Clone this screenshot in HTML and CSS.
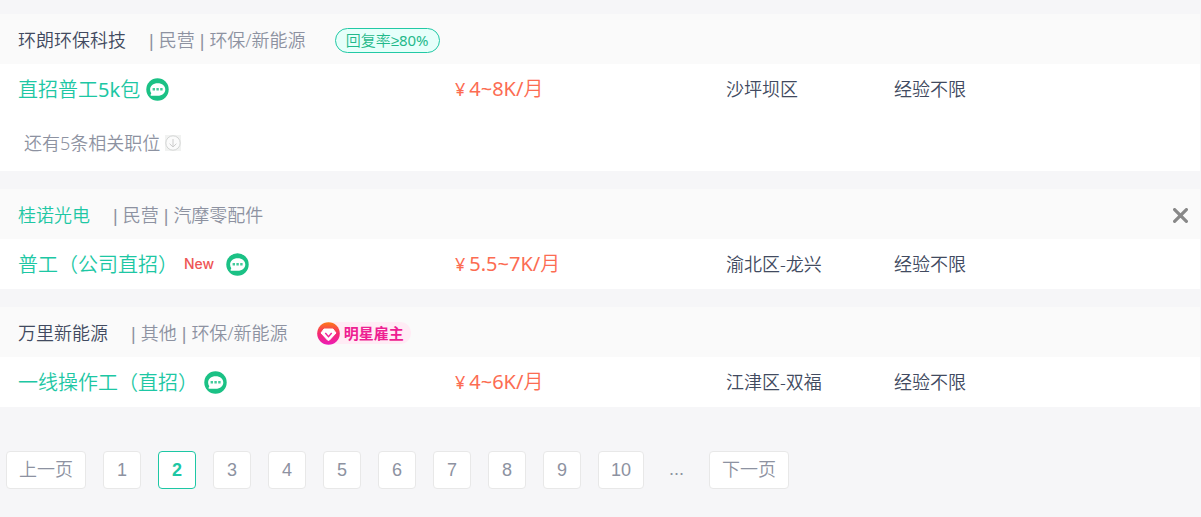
FILE: index.html
```
<!DOCTYPE html>
<html lang="zh-CN">

<head>
    <meta charset="UTF-8">
    <meta name="viewport" content="width=device-width, initial-scale=1.0">
    <title>职位列表</title>

    <link rel="stylesheet" href="styles.css">
</head>

<body>
    <svg hidden>
        <symbol id="chat" viewBox="0 0 23 23">
            <circle cx="11.5" cy="11.5" r="11.2" fill="#1bc185" />
            <path d="M11.7 5.2c4.5 0 7.6 2.6 7.6 6.2s-3.1 6.3-7.6 6.3H5.2c-.8 0-.9-.7-.5-1.2l.6-1.2c-.8-1.1-1.2-2.4-1.2-3.9 0-3.6 3.1-6.2 7.6-6.2z" fill="#fff" />
            <path d="M6.6 10.1h2.4v2.4H6.6zM10.4 10.1h2.4v2.4h-2.4zM14.2 10.1h2.4v2.4h-2.4z" fill="#43cb9b" />
        </symbol>
    </svg>

    <main class="job-list">
        <section class="job-card">
            <header class="company">
                <a class="company-name" href="#">环朗环保科技</a>
                <p class="company-info"><span class="sep">| </span>民营<span class="sep"> | </span>环保/新能源</p>
                <span class="reply-tag">回复率<span class="sep">≥</span><span class="latin">80%</span></span>
            </header>
            <div class="job">
                <div class="job-title">
                    <a href="#">直招普工<span class="latin">5k</span>包</a>
                    <svg class="chat-icon"><use href="#chat" /></svg>
                </div>
                <span class="salary"><span class="yen">¥</span><span class="latin">4~8K/</span>月</span>
                <span>沙坪坝区</span>
                <span>经验不限</span>
            </div>
            <button class="more" type="button">
                还有5条相关职位
                <svg class="more-icon" viewBox="0 0 16 16">
                    <rect width="16" height="16" fill="#f1f2f1" />
                    <circle cx="8" cy="8" r="7.2" fill="#fbfbfb" stroke="#d3d5d4" />
                    <path d="M8 4v8M4.6 8.7L8 12l3.4-3.3" fill="none" stroke="#ccc" />
                </svg>
            </button>
        </section>

        <section class="job-card">
            <header class="company">
                <a class="company-name active" href="#">桂诺光电</a>
                <p class="company-info"><span class="sep">| </span>民营<span class="sep"> | </span>汽摩零配件</p>
                <button class="close" type="button" aria-label="关闭">
                    <svg viewBox="0 0 14 14">
                        <path d="M1.5 1.5l11 11M12.5 1.5l-11 11" stroke="#888" stroke-width="3" stroke-linecap="round" />
                    </svg>
                </button>
            </header>
            <div class="job">
                <div class="job-title">
                    <a href="#">普工（公司直招）</a>
                    <span class="new">New</span>
                    <svg class="chat-icon"><use href="#chat" /></svg>
                </div>
                <span class="salary"><span class="yen">¥</span><span class="latin">5.5~7K/</span>月</span>
                <span>渝北区-龙兴</span>
                <span>经验不限</span>
            </div>
        </section>

        <section class="job-card">
            <header class="company">
                <a class="company-name" href="#">万里新能源</a>
                <p class="company-info"><span class="sep">| </span>其他<span class="sep"> | </span>环保/新能源</p>
                <span class="star-tag">
                    <svg class="star-icon" viewBox="0 0 23 23">
                        <defs>
                            <linearGradient id="star-bg" x1="0" y1="0" x2="0" y2="1">
                                <stop offset="0" stop-color="#fd7a14" />
                                <stop offset=".5" stop-color="#f52a70" />
                                <stop offset="1" stop-color="#ec1bb8" />
                            </linearGradient>
                        </defs>
                        <circle cx="11.5" cy="11.5" r="11.3" fill="url(#star-bg)" />
                        <path d="M7 7h9l3 4-6.500 7q-1 1-2 0L4 11z" fill="#fff" stroke="#fff" stroke-linejoin="round" />
                        <path d="M8.300 11l3.200 3.700 3.200-3.700" fill="none" stroke="#f0249a" stroke-width="1.400" />
                    </svg>
                    明星雇主
                </span>
            </header>
            <div class="job">
                <div class="job-title">
                    <a href="#">一线操作工（直招）</a>
                    <svg class="chat-icon"><use href="#chat" /></svg>
                </div>
                <span class="salary"><span class="yen">¥</span><span class="latin">4~6K/</span>月</span>
                <span>江津区-双福</span>
                <span>经验不限</span>
            </div>
        </section>
    </main>

    <nav class="pagination">
        <a href="#">上一页</a>
        <a href="#">1</a>
        <a class="current" href="#" aria-current="page">2</a>
        <a href="#">3</a>
        <a href="#">4</a>
        <a href="#">5</a>
        <a href="#">6</a>
        <a href="#">7</a>
        <a href="#">8</a>
        <a href="#">9</a>
        <a href="#">10</a>
        <span class="dots">...</span>
        <a href="#">下一页</a>
    </nav>
</body>

</html>
```
FILE: styles.css
```
* {
    box-sizing: border-box;
}

body {
    margin: 0;
    font-family: "Noto Sans", "Noto Sans CJK SC", sans-serif;
    font-size: 18px;
    font-weight: 350;
    line-height: 24px;
    color: #414a60;
    background: #f6f6f8;
}

a {
    color: inherit;
    text-decoration: none;
}

button {
    padding: 0;
    border: 0;
    font: inherit;
    background: none;
    cursor: pointer;
}

svg {
    display: block;
    flex: none;
}

svg[hidden] {
    display: none;
}

.job-list {
    display: flex;
    flex-direction: column;
    gap: 18px;
    margin-right: 1px;
    padding-top: 14px;
}

.job-card {
    background: #fff;
}

.company {
    display: flex;
    align-items: center;
    height: 50px;
    padding: 2px 12px 0 18px;
    background: #fafafa;
}

.company-name.active {
    color: #1dc7a4;
}

.company-info {
    margin: 0 29px 0 23px;
    color: #8d92a1;
}

.sep {
    font-family: "Liberation Sans", sans-serif;
    white-space: pre;
}

.latin {
    font-weight: 400;
}

.reply-tag {
    height: 25px;
    padding: 0 10px;
    border: 1px solid #22c9a5;
    border-radius: 13px;
    font-size: 15px;
    line-height: 23px;
    color: #1fb98a;
    background: #e6fffa;
}

.star-tag {
    display: flex;
    align-items: center;
    gap: 4px;
    height: 22px;
    padding-right: 7px;
    border-radius: 11px;
    font-size: 15px;
    font-weight: 700;
    color: #ee1f92;
    background: #ffecf5;
}

.star-icon,
.chat-icon {
    width: 23px;
    height: 23px;
}

.close {
    margin-left: auto;
}

.close svg {
    width: 15px;
    height: 15px;
}

.job {
    display: grid;
    grid-template-columns: 437fr 271fr 168fr 306fr;
    align-items: center;
    height: 50px;
    padding-left: 18px;
}

.job-title {
    display: flex;
    align-items: center;
    gap: 6px;
    font-size: 20px;
    color: #1dc7a4;
}

.job-title a {
    padding-top: 2px;
}

.new {
    margin-right: 6px;
    font-family: Inter, sans-serif;
    font-size: 14px;
    font-weight: 500;
    color: #ee5555;
}

.salary {
    font-size: 20px;
    color: #fc6c52;
}

.yen {
    margin-right: 4px;
    font-size: 18px;
    font-weight: 400;
}

.more {
    display: flex;
    align-items: center;
    gap: 5px;
    height: 57px;
    padding-left: 24px;
    color: #8d92a1;
}

.more-icon {
    width: 16px;
    height: 16px;
}

.pagination {
    display: flex;
    gap: 17px;
    padding: 44px 6px 28px;
    font-family: "Liberation Sans", "Noto Sans CJK SC", sans-serif;
    line-height: 36px;
    text-align: center;
    color: #8d92a1;
}

.pagination a {
    min-width: 38px;
    padding: 0 12px;
    border: 1px solid #e8e8e8;
    border-radius: 4px;
    background: #fff;
}

.pagination .current {
    border-color: #1dc7a4;
    font-weight: 700;
    color: #1dc7a4;
}

.dots {
    padding: 0 8px;
}
```
